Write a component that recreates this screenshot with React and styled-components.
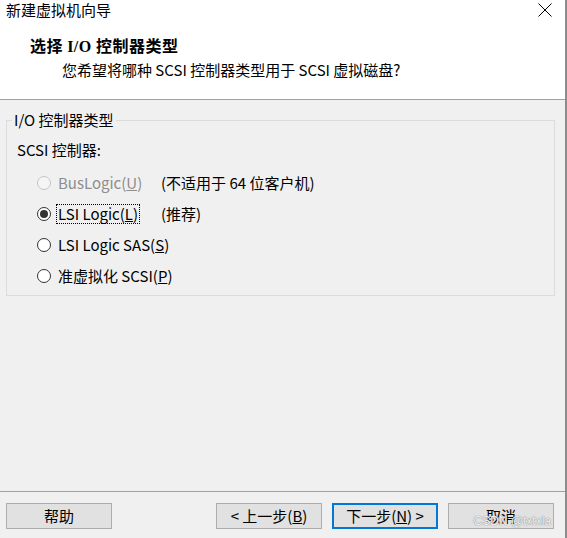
import React, { useState } from "react";
import styled, { createGlobalStyle } from "styled-components";

const GlobalStyle = createGlobalStyle`
  html, body {
    margin: 0;
    padding: 0;
    background: #ffffff;
  }
  * {
    box-sizing: border-box;
  }
`;

const uiFont = `"Noto Sans CJK SC", "Noto Sans", sans-serif`;

const Window = styled.div`
  position: relative;
  width: 567px;
  height: 538px;
  display: flex;
  flex-direction: column;
  background: #f0f0f0;
  border-right: 2px solid #8c8c8c;
  font-family: ${uiFont};
  font-size: 15px;
  color: #000;
  overflow: hidden;
`;

const TitleBar = styled.div`
  height: 20px;
  display: flex;
  align-items: center;
  justify-content: space-between;
  padding: 0 13px 0 6px;
  background: #fff;
  line-height: 18px;
`;

const Header = styled.div`
  height: 80px;
  padding: 15px 0 0 30px;
  background: #fff;
  border-bottom: 1px solid #a0a0a0;
`;

const Heading = styled.div`
  font-weight: bold;
  font-size: 16px;
  line-height: 20px;
  font-family: "Liberation Serif", "Noto Sans CJK SC", serif;
  letter-spacing: 0.5px;

  span {
    font-family: ${uiFont};
  }
`;

const SubHeading = styled.div`
  margin-top: 3px;
  padding-left: 32px;
  line-height: 20px;
`;

const Body = styled.div`
  flex: 1;
  padding: 10px 10px 0 6px;
`;

const GroupBox = styled.fieldset`
  margin: 0;
  padding: 0 10px 8px 10px;
  border: 1px solid #dcdcdc;
  min-width: 0;
`;

const Legend = styled.legend`
  padding: 0 2px;
  margin-left: -5px;
  line-height: 20px;
`;

const GroupLabel = styled.div`
  margin-top: 10px;
  line-height: 20px;
`;

const Options = styled.div`
  display: flex;
  flex-direction: column;
  gap: 9px;
  margin-top: 12px;
  padding-left: 20px;
`;

const Row = styled.div`
  display: grid;
  grid-template-columns: 14px 100px auto;
  column-gap: 5px;
  align-items: center;
  height: 22px;
  cursor: ${(p) => (p.disabled ? "default" : "pointer")};
`;

const Circle = styled.span`
  width: 14px;
  min-width: 14px;
  height: 14px;
  border-radius: 50%;
  border: 1px solid ${(p) => (p.disabled ? "#c4c4c4" : "#333")};
  background: ${(p) => (p.disabled ? "#f5f5f5" : "#fff")};
  display: flex;
  align-items: center;
  justify-content: center;

  &::after {
    content: "";
    width: 8px;
    height: 8px;
    border-radius: 50%;
    background: #333;
    display: ${(p) => (p.checked ? "block" : "none")};
  }
`;

const LabelCell = styled.div`
  display: flex;
  white-space: nowrap;
`;

const Label = styled.span`
  display: inline-block;
  padding: 0 1px;
  line-height: 18px;
  border: 1px dotted ${(p) => (p.focused ? "#000" : "transparent")};
  color: ${(p) => (p.disabled ? "#8d8d8d" : "#000")};
`;

const Note = styled.span`
  white-space: nowrap;
  line-height: 20px;
`;

const Footer = styled.div`
  height: 47px;
  border-top: 1px solid #a0a0a0;
  padding: 11px 11px 0 6px;
  display: flex;
  align-items: flex-start;
`;

const Spacer = styled.div`
  flex: 1;
`;

const Button = styled.button`
  width: 106px;
  height: 26px;
  margin-left: ${(p) => (p.first ? "0" : "10px")};
  padding: 0;
  background: #e1e1e1;
  border: ${(p) => (p.primary ? "2px solid #0078d7" : "1px solid #adadad")};
  font-family: ${uiFont};
  font-size: 15px;
  color: #000;
  line-height: 20px;
  outline: none;
`;

const Watermark = styled.div`
  position: absolute;
  right: 14px;
  bottom: 10px;
  font-family: "Liberation Sans", Arial, sans-serif;
  font-size: 12px;
  color: rgba(255, 255, 255, 0.9);
  text-shadow: 0 0 1px #888, 0 0 1px #888;
  pointer-events: none;
`;

const CloseIcon = () => (
  <svg width="14" height="14" viewBox="0 0 14 14">
    <path d="M0.5 0.5 L13.5 13.5 M13.5 0.5 L0.5 13.5" stroke="#000" strokeWidth="1" fill="none" />
  </svg>
);

const options = [
  { id: "bus", label: "BusLogic(", key: "U", note: "(不适用于 64 位客户机)", disabled: true },
  { id: "lsi", label: "LSI Logic(", key: "L", note: "(推荐)" },
  { id: "sas", label: "LSI Logic SAS(", key: "S" },
  { id: "pv", label: "准虚拟化 SCSI(", key: "P" },
];

export default function App() {
  const [selected, setSelected] = useState("lsi");

  return (
    <>
      <GlobalStyle />
      <Window>
        <TitleBar>
          <span>新建虚拟机向导</span>
          <CloseIcon />
        </TitleBar>
        <Header>
          <Heading>
            <span>选择 </span>I/O<span> 控制器类型</span>
          </Heading>
          <SubHeading>您希望将哪种 SCSI 控制器类型用于 SCSI 虚拟磁盘?</SubHeading>
        </Header>
        <Body>
          <GroupBox>
            <Legend>I/O 控制器类型</Legend>
            <GroupLabel>SCSI 控制器:</GroupLabel>
            <Options>
              {options.map((o) => (
                <Row
                  key={o.id}
                  disabled={o.disabled}
                  onClick={() => !o.disabled && setSelected(o.id)}
                >
                  <Circle disabled={o.disabled} checked={selected === o.id} />
                  <LabelCell>
                    <Label disabled={o.disabled} focused={selected === o.id}>
                      {o.label}
                      <u>{o.key}</u>)
                    </Label>
                  </LabelCell>
                  {o.note && <Note>{o.note}</Note>}
                </Row>
              ))}
            </Options>
          </GroupBox>
        </Body>
        <Footer>
          <Button first>帮助</Button>
          <Spacer />
          <Button>
            &lt; 上一步(<u>B</u>)
          </Button>
          <Button primary>
            下一步(<u>N</u>) &gt;
          </Button>
          <Button>取消</Button>
        </Footer>
        <Watermark>CSDN @txtxla</Watermark>
      </Window>
    </>
  );
}
